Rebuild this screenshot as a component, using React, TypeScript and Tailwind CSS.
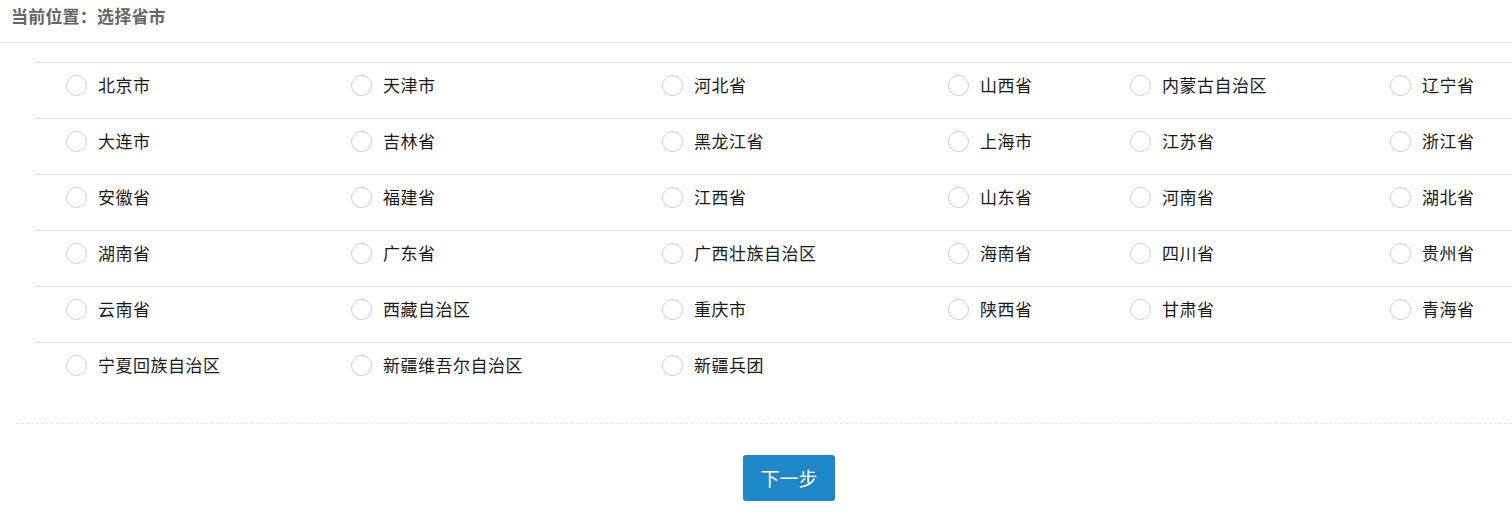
import React from 'react';

const rows: string[][] = [
  ['北京市', '天津市', '河北省', '山西省', '内蒙古自治区', '辽宁省'],
  ['大连市', '吉林省', '黑龙江省', '上海市', '江苏省', '浙江省'],
  ['安徽省', '福建省', '江西省', '山东省', '河南省', '湖北省'],
  ['湖南省', '广东省', '广西壮族自治区', '海南省', '四川省', '贵州省'],
  ['云南省', '西藏自治区', '重庆市', '陕西省', '甘肃省', '青海省'],
  ['宁夏回族自治区', '新疆维吾尔自治区', '新疆兵团'],
];

const font = { fontFamily: '"Noto Sans CJK SC", "Noto Sans", sans-serif' };

function Option({ label }: { label: string }) {
  return (
    <label className="flex items-center gap-[11px] cursor-pointer">
      <span className="w-[21px] h-[21px] rounded-full border border-[#cfcfcf] bg-white shrink-0" />
      <span className="text-[17px] leading-[22px] tracking-[0.5px] text-[#1a1a1a]">{label}</span>
    </label>
  );
}

export default function App() {
  return (
    <div className="w-[1512px] h-[516px] bg-white overflow-hidden" style={font}>
      <div className="h-[43px] border-b border-[#e5e5e5] pl-[11px] pt-[4px]">
        <span className="text-[17px] leading-[24px] font-bold tracking-[0.2px] text-[#666]">
          当前位置：选择省市
        </span>
      </div>

      <div className="mt-[19px] ml-[35px]">
        {rows.map((row, i) => (
          <div
            key={i}
            className="h-[56px] border-t border-[#e3e3e3] pl-[31px] pt-[11px] grid grid-cols-[285px_311px_286px_182px_260px_1fr] items-start content-start"
          >
            {row.map((name) => (
              <Option key={name} label={name} />
            ))}
          </div>
        ))}
      </div>

      <div className="ml-[16px] mt-[25px] border-t border-dashed border-[#e6e6e6]" />

      <div className="pl-[743px] pt-[31px]">
        <button className="w-[92px] h-[46px] rounded-[3px] bg-[#1e87c7] text-white text-[19px]">
          下一步
        </button>
      </div>
    </div>
  );
}
